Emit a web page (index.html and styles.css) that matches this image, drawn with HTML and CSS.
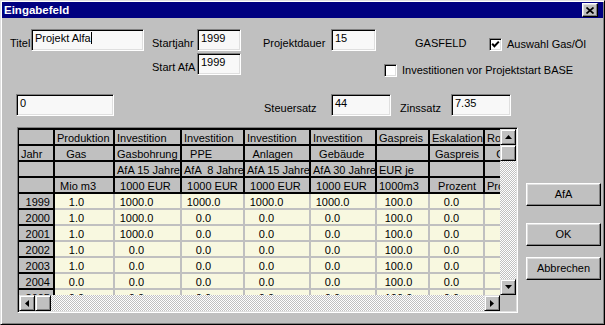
FILE: index.html
```html
<!DOCTYPE html>
<html lang="de">
<head>
<meta charset="utf-8">
<title>Eingabefeld</title>
<link rel="stylesheet" href="styles.css">
</head>
<body>
<div class="window">
  <div class="titlebar">
    <span class="title">Eingabefeld</span>
    <span class="close"><svg width="8" height="7" viewBox="0 0 8 7"><path d="M0.5 0.5 L7.5 6.5 M7.5 0.5 L0.5 6.5" stroke="#000" stroke-width="1.7" fill="none"/></svg></span>
  </div>
  <div class="client">
    <div class="row row-a">
      <span class="lbl lbl-titel">Titel</span>
      <div class="field f-titel">Projekt Alfa<span class="caret"></span></div>
      <span class="lbl lbl-start">Startjahr</span>
      <div class="field f-year">1999</div>
      <span class="lbl lbl-dauer">Projektdauer</span>
      <div class="field f-dauer">15</div>
      <span class="lbl lbl-gas">GASFELD</span>
      <span class="opt opt-a">
        <span class="check"><svg width="9" height="9" viewBox="0 0 9 9"><path d="M1.2 3.8 L3.4 6.2 L7.8 1.6" stroke="#000" stroke-width="2" fill="none"/></svg></span>
        <span class="opt-text">Auswahl Gas/Öl</span>
      </span>
    </div>
    <div class="row row-b">
      <span class="lbl lbl-afa">Start AfA</span>
      <div class="field f-year">1999</div>
      <span class="opt opt-b">
        <span class="check"></span>
        <span class="opt-text">Investitionen vor Projektstart BASE</span>
      </span>
    </div>
    <div class="row row-c">
      <div class="field f-zero">0</div>
      <span class="lbl lbl-steuer">Steuersatz</span>
      <div class="field f-rate">44</div>
      <span class="lbl lbl-zins">Zinssatz</span>
      <div class="field f-rate">7.35</div>
    </div>
    <div class="main">
      <div class="gridframe">
        <div class="viewport">
          <div class="sheet">
            <div class="c h"></div><div class="c h">Produktion</div><div class="c h">Investition</div><div class="c h">Investition</div><div class="c h">Investition</div><div class="c h">Investition</div><div class="c h">Gaspreis</div><div class="c h">Eskalation</div><div class="c h">Royalty</div>
            <div class="c h">Jahr</div><div class="c h">   Gas</div><div class="c h">Gasbohrung</div><div class="c h">  PPE</div><div class="c h">  Anlagen</div><div class="c h">  Gebäude</div><div class="c h"></div><div class="c h"> Gaspreis</div><div class="c h">   Gas</div>
            <div class="c h"></div><div class="c h"></div><div class="c h">AfA 15 Jahre</div><div class="c h">AfA  8 Jahre</div><div class="c h">AfA 15 Jahre</div><div class="c h">AfA 30 Jahre</div><div class="c h">EUR je</div><div class="c h"></div><div class="c h"></div>
            <div class="c h"></div><div class="c h"> Mio m3</div><div class="c h"> 1000 EUR</div><div class="c h"> 1000 EUR</div><div class="c h"> 1000 EUR</div><div class="c h"> 1000 EUR</div><div class="c h">1000m3</div><div class="c h">  Prozent</div><div class="c h">Prozent</div>

            <div class="c y">1999</div><div class="c d"><span>1.0</span></div><div class="c d"><span>1000.0</span></div><div class="c d"><span>1000.0</span></div><div class="c d"><span>1000.0</span></div><div class="c d"><span>1000.0</span></div><div class="c d"><span>100.0</span></div><div class="c d"><span>0.0</span></div><div class="c d"></div>
            <div class="c y">2000</div><div class="c d"><span>1.0</span></div><div class="c d"><span>1000.0</span></div><div class="c d"><span>0.0</span></div><div class="c d"><span>0.0</span></div><div class="c d"><span>0.0</span></div><div class="c d"><span>100.0</span></div><div class="c d"><span>0.0</span></div><div class="c d"></div>
            <div class="c y">2001</div><div class="c d"><span>1.0</span></div><div class="c d"><span>1000.0</span></div><div class="c d"><span>0.0</span></div><div class="c d"><span>0.0</span></div><div class="c d"><span>0.0</span></div><div class="c d"><span>100.0</span></div><div class="c d"><span>0.0</span></div><div class="c d"></div>
            <div class="c y">2002</div><div class="c d"><span>1.0</span></div><div class="c d"><span>0.0</span></div><div class="c d"><span>0.0</span></div><div class="c d"><span>0.0</span></div><div class="c d"><span>0.0</span></div><div class="c d"><span>100.0</span></div><div class="c d"><span>0.0</span></div><div class="c d"></div>
            <div class="c y">2003</div><div class="c d"><span>1.0</span></div><div class="c d"><span>0.0</span></div><div class="c d"><span>0.0</span></div><div class="c d"><span>0.0</span></div><div class="c d"><span>0.0</span></div><div class="c d"><span>100.0</span></div><div class="c d"><span>0.0</span></div><div class="c d"></div>
            <div class="c y">2004</div><div class="c d"><span>0.0</span></div><div class="c d"><span>0.0</span></div><div class="c d"><span>0.0</span></div><div class="c d"><span>0.0</span></div><div class="c d"><span>0.0</span></div><div class="c d"><span>100.0</span></div><div class="c d"><span>0.0</span></div><div class="c d"></div>
            <div class="c y">2005</div><div class="c d"><span>0.0</span></div><div class="c d"><span>0.0</span></div><div class="c d"><span>0.0</span></div><div class="c d"><span>0.0</span></div><div class="c d"><span>0.0</span></div><div class="c d"><span>100.0</span></div><div class="c d"><span>0.0</span></div><div class="c d"></div>
          </div>
        </div>
        <div class="vscroll">
          <div class="sbtn"><svg width="7" height="4" viewBox="0 0 7 4"><polygon points="3.5,0 7,4 0,4"/></svg></div>
          <div class="sbtn"></div>
          <div class="track"></div>
          <div class="sbtn"><svg width="7" height="4" viewBox="0 0 7 4"><polygon points="0,0 7,0 3.5,4"/></svg></div>
        </div>
        <div class="hscroll">
          <div class="sbtn"><svg width="4" height="7" viewBox="0 0 4 7"><polygon points="4,0 4,7 0,3.5"/></svg></div>
          <div class="sbtn"></div>
          <div class="track"></div>
          <div class="sbtn"><svg width="4" height="7" viewBox="0 0 4 7"><polygon points="0,0 0,7 4,3.5"/></svg></div>
        </div>
        <div class="corner"></div>
      </div>
      <div class="buttons">
        <div class="btn btn-afa">AfA</div>
        <div class="btn btn-ok">OK</div>
        <div class="btn btn-cancel">Abbrechen</div>
      </div>
    </div>
  </div>
</div>
</body>
</html>
```
FILE: styles.css
```css
* { box-sizing: border-box; }
html, body { margin: 0; padding: 0; }
body {
  width: 605px;
  height: 325px;
  overflow: hidden;
  background: #c0c0c0;
  font-family: "Liberation Sans", Arial, sans-serif;
  font-size: 11px;
  color: #000;
}
.window {
  width: 605px;
  height: 325px;
  background: #c0c0c0;
  border: 1px solid;
  border-color: #dfdfdf #000 #000 #dfdfdf;
  box-shadow: inset 1px 1px #fff, inset -1px -1px #808080;
  padding: 1px;
}
.titlebar {
  height: 16px;
  background: #000080;
  color: #fff;
  display: flex;
  align-items: center;
  justify-content: space-between;
  padding: 0 5px 0 2px;
}
.title { font-weight: bold; font-size: 11.5px; }
.close {
  width: 16px;
  height: 14px;
  background: #c0c0c0;
  border: 1px solid;
  border-color: #fff #000 #000 #fff;
  box-shadow: inset -1px -1px #808080, inset 1px 1px #dfdfdf;
  display: flex;
  align-items: center;
  justify-content: center;
}
.close svg { display: block; margin-left: -1px; }

.row { display: flex; align-items: center; height: 22px; }
.row-a { margin-top: 11px; }
.row-b { margin-top: 2px; }
.row-c { margin-top: 19px; }

.lbl { padding-top: 6px; line-height: 13px; white-space: nowrap; }
.lbl-titel { margin-left: 8px; width: 21px; }
.lbl-start { margin-left: 8px; width: 45px; }
.lbl-dauer { margin-left: 22px; width: 68px; }
.lbl-gas { margin-left: 39px; width: 74px; }
.lbl-afa { margin-left: 150px; width: 45px; }
.lbl-steuer { margin-left: 150px; width: 67px; }
.lbl-zins { margin-left: 9px; width: 51px; }

.field {
  height: 22px;
  background: #f8f8f8;
  border: 1px solid;
  border-color: #808080 #fff #fff #808080;
  box-shadow: inset 1px 1px #000, inset -1px -1px #dfdfdf;
  padding: 1px 3px;
  line-height: 14px;
  white-space: nowrap;
  align-self: flex-start;
}
.f-titel { width: 113px; }
.f-year { width: 44px; }
.f-dauer { width: 45px; }
.f-zero { margin-left: 14px; width: 98px; }
.f-rate { width: 60px; }
.caret {
  display: inline-block;
  width: 1px;
  height: 12px;
  background: #000;
  vertical-align: -2px;
}

.opt { display: flex; align-items: center; white-space: nowrap; }
.opt-a { margin-top: 9px; }
.opt-b { margin-top: 12px; margin-left: 143px; }
.opt-text { margin-left: 5px; line-height: 13px; }
.check {
  width: 13px;
  height: 13px;
  background: #fff;
  border: 1px solid;
  border-color: #808080 #fff #fff #808080;
  box-shadow: inset 1px 1px #000, inset -1px -1px #dfdfdf;
  display: flex;
  align-items: center;
  justify-content: center;
}
.check svg { display: block; }

.main { display: flex; margin-top: 11px; }
.gridframe {
  margin-left: 15px;
  width: 501px;
  height: 186px;
  border: 1px solid;
  border-color: #808080 #fff #fff #808080;
  box-shadow: inset 1px 1px #000, inset -1px -1px #dfdfdf;
  padding: 1px;
  display: grid;
  grid-template-columns: 481px 16px;
  grid-template-rows: 166px 16px;
}
.viewport {
  overflow: hidden;
  border-top: 1px solid #000;
  background: #c0c0c0;
}
.sheet {
  display: grid;
  grid-template-columns: 36px 60px 67px 63px 66px 66px 53px 55px 60px;
  grid-auto-rows: 16px;
  width: max-content;
}
.c {
  border-right: 2px solid #c0c0c0;
  border-bottom: 2px solid #c0c0c0;
  background: #f8f8e0;
  overflow: hidden;
  white-space: pre;
  line-height: 16px;
}
.h {
  background: #c0c0c0;
  border-color: #000;
  padding-left: 2px;
}
.y {
  background: #c0c0c0;
  border-color: #000;
  text-align: right;
  padding-right: 3px;
}
.d span {
  display: inline-block;
  width: 43px;
  text-align: center;
}

.vscroll, .hscroll { display: flex; }
.vscroll { flex-direction: column; }
.track {
  flex: 1;
  background-color: #c0c0c0;
  background-image: conic-gradient(#fff 25%, #c0c0c0 0 50%, #fff 0 75%, #c0c0c0 0);
  background-size: 2px 2px;
}
.sbtn {
  width: 16px;
  height: 16px;
  flex: none;
  background: #c0c0c0;
  border: 1px solid;
  border-color: #dfdfdf #000 #000 #dfdfdf;
  box-shadow: inset 1px 1px #fff, inset -1px -1px #808080;
  display: flex;
  align-items: center;
  justify-content: center;
}
.sbtn svg { display: block; fill: #000; }
.corner { background: #c0c0c0; }

.buttons {
  display: flex;
  flex-direction: column;
  margin-left: 8px;
  margin-top: 56px;
}
.btn {
  width: 75px;
  height: 23px;
  background: #c0c0c0;
  border: 1px solid;
  border-color: #fff #000 #000 #fff;
  box-shadow: inset -1px -1px #808080, inset 1px 1px #dfdfdf;
  display: flex;
  align-items: center;
  justify-content: center;
  line-height: 13px;
}
.btn-ok { margin-top: 17px; }
.btn-cancel { margin-top: 11px; }
```
